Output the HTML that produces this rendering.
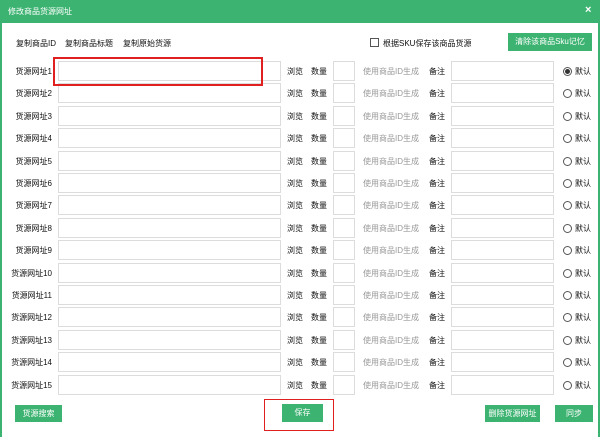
<html><head><style>
body{margin:0;width:600px;height:437px;overflow:hidden;background:#fff;font-family:"Liberation Sans","Noto Sans CJK SC",sans-serif;font-size:8px;color:#111;position:relative}
.a{position:absolute;white-space:nowrap}
.t{left:0;top:0;width:600px;height:23px;background:#3cb371;color:#fff;}
.in{border:1px solid #dcdcdc;background:#fff;box-sizing:border-box}
.btn{background:#3cb371;color:#fff;text-align:center;box-sizing:border-box}
.radio{width:9px;height:9px;border:1px solid #555;border-radius:50%;box-sizing:border-box}
</style></head><body>
<div class="a t"><span class="a" style="left:8px;top:6px;font-size:8px">修改商品货源网址</span><span class="a" style="left:585px;top:4px;font-size:11px;font-weight:bold">×</span></div>
<div class="a" style="left:0;top:23px;width:2px;height:414px;background:#3cb371"></div>
<div class="a" style="right:0;top:23px;width:2px;height:414px;background:#3cb371"></div>
<div class="a" style="left:16px;top:38px">复制商品ID</div>
<div class="a" style="left:65px;top:38px">复制商品标题</div>
<div class="a" style="left:123px;top:38px">复制原始货源</div>
<div class="a in" style="left:370px;top:38px;width:9px;height:9px;border-color:#555"></div>
<div class="a" style="left:383px;top:38px">根据SKU保存该商品货源</div>
<div class="a btn" style="left:508px;top:33px;width:84px;height:18px;line-height:18px">清除该商品Sku记忆</div>
<div id="rows"></div>
<div class="a" style="left:53px;top:57px;width:206px;height:25px;border:2px solid #e02020"></div>
<div class="a btn" style="left:15px;top:405px;width:47px;height:17px;line-height:17px">货源搜索</div>
<div class="a btn" style="left:282px;top:404px;width:41px;height:18px;line-height:18px">保存</div>
<div class="a" style="left:264px;top:399px;width:68px;height:30px;border:1.5px solid #e02020"></div>
<div class="a btn" style="left:485px;top:405px;width:55px;height:17px;line-height:17px">删除货源网址</div>
<div class="a btn" style="left:555px;top:405px;width:38px;height:17px;line-height:17px">同步</div>
<script>
var h='';for(var i=0;i<15;i++){var y=61+i*22.4;
h+='<div class="a" style="right:548px;top:'+(y+5)+'px">货源网址'+(i+1)+'</div>';
h+='<div class="a in" style="left:58px;top:'+y+'px;width:223px;height:20px"></div>';
h+='<div class="a" style="left:287px;top:'+(y+5)+'px">浏览</div>';
h+='<div class="a" style="left:311px;top:'+(y+5)+'px">数量</div>';
h+='<div class="a in" style="left:333px;top:'+y+'px;width:22px;height:20px"></div>';
h+='<div class="a" style="left:363px;top:'+(y+5)+'px;color:#999">使用商品ID生成</div>';
h+='<div class="a" style="left:429px;top:'+(y+5)+'px">备注</div>';
h+='<div class="a in" style="left:451px;top:'+y+'px;width:103px;height:20px"></div>';
h+='<div class="a radio" style="left:563px;top:'+(y+6)+'px">'+(i==0?'<div style="width:5px;height:5px;border-radius:50%;background:#333;margin:1px"></div>':'')+'</div>';
h+='<div class="a" style="left:575px;top:'+(y+5)+'px">默认</div>';}
document.getElementById('rows').innerHTML=h;
</script>
</body></html>
